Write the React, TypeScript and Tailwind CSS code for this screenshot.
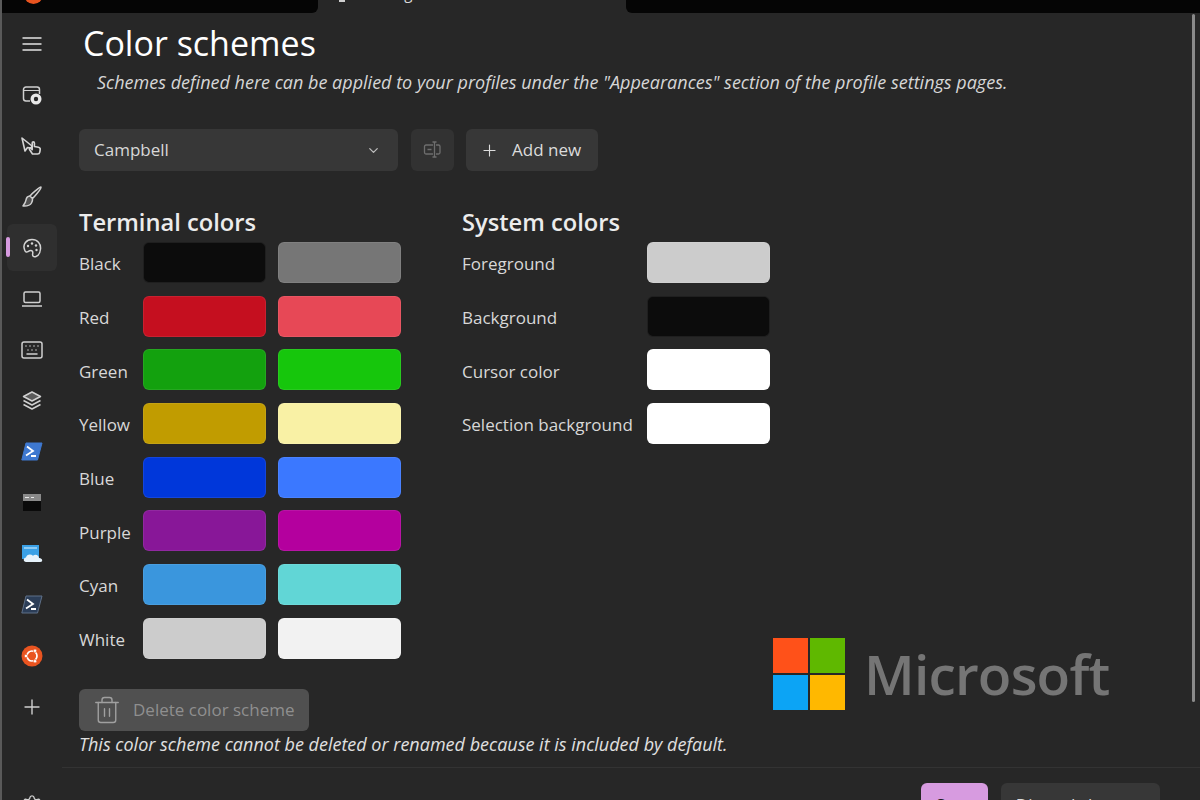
import { ChevronDown, Keyboard, Plus, Settings, Trash2 } from 'lucide-react'
import React from 'react'

const font = "font-['Open_Sans',sans-serif]"

const terminalColors = [
  { name: 'Black', dark: 'bg-[#0c0c0c]', light: 'bg-[#767676]' },
  { name: 'Red', dark: 'bg-[#c50f1f]', light: 'bg-[#e74856]' },
  { name: 'Green', dark: 'bg-[#13a10e]', light: 'bg-[#16c60c]' },
  { name: 'Yellow', dark: 'bg-[#c19c00]', light: 'bg-[#f9f1a5]' },
  { name: 'Blue', dark: 'bg-[#0037da]', light: 'bg-[#3b78ff]' },
  { name: 'Purple', dark: 'bg-[#881798]', light: 'bg-[#b4009e]' },
  { name: 'Cyan', dark: 'bg-[#3a96dd]', light: 'bg-[#61d6d6]' },
  { name: 'White', dark: 'bg-[#cccccc]', light: 'bg-[#f2f2f2]' },
]

const systemColors = [
  { name: 'Foreground', color: 'bg-[#cccccc]' },
  { name: 'Background', color: 'bg-[#0c0c0c]' },
  { name: 'Cursor color', color: 'bg-[#ffffff]' },
  { name: 'Selection background', color: 'bg-[#ffffff]' },
]

const MenuIcon = () => (
  <svg width="22" height="16" viewBox="0 0 22 16" stroke="#b4b4b4" strokeWidth="1.800">
    <path d="M1.500 2h19M1.500 8h19M1.500 14h19" />
  </svg>
)

const StartupIcon = () => (
  <svg width="22" height="22" viewBox="0 0 22 22" fill="none" stroke="#d0d0d0" strokeWidth="1.500">
    <path d="M9 17H5a2.500 2.500 0 0 1-2.500-2.500v-9A2.500 2.500 0 0 1 5 3h11a2.500 2.500 0 0 1 2.500 2.500V10" />
    <path d="M2.500 6.500h16" strokeWidth="1" />
    <circle cx="15" cy="15" r="5.500" fill="#e8e8e8" stroke="none" />
    <circle cx="15" cy="15" r="2.200" fill="#272727" stroke="none" />
  </svg>
)

const InteractionIcon = () => (
  <svg width="24" height="22" viewBox="0 0 24 22" fill="none" stroke="#d4d4d4" strokeWidth="1.600" strokeLinejoin="round">
    <path d="M2 3l3 13 2.500-3.500 3.500.5 1-2z" />
    <path d="M12.500 19l-3-4.500c-.6-1.100 1-2 1.800-1l.9 1.200V8c0-1.500 2.200-1.500 2.200 0v3.500l4 .8c1.400.3 2 1.200 1.800 2.400l-.4 2.400c-.2 1.200-1.100 1.900-2.300 1.900z" />
  </svg>
)

const BrushIcon = () => (
  <svg width="22" height="24" viewBox="0 0 22 24" fill="none" stroke="#d0d0d0" strokeWidth="1.500" strokeLinejoin="round">
    <path d="M20 2c.6.600-1.500 3.500-4 6.500-1.800 2.200-3.400 4-4.500 5l-2.500-2.500c1-1.200 2.800-3 5-4.800C17 3.700 19.400 1.400 20 2z" />
    <path d="M9 11c-2.500.2-3.700 1.800-4 4-.2 1.800-1.200 3.600-3 6 3.800.2 7.200-.6 8.500-3 .8-1.500 1.200-3 1-4.500" fill="#d0d0d0" fillOpacity=".25" />
  </svg>
)

const PaletteIcon = () => (
  <svg width="22" height="22" viewBox="0 0 22 22" fill="none" stroke="#d4d4d4" strokeWidth="1.500" strokeLinejoin="round">
    <path d="M3.500 12.500C1.500 7 5.500 2.500 11 2.500s9 4 8.500 9.500c-.3 3.500-1.800 6.500-4.500 7.500-2.500.9-3.800-.6-3.300-2.800.4-1.800-.3-3.200-2-3.200-1.200 0-2 .7-2.800 1.200-1.300.8-3 .2-3.400-2.200z" />
    <circle cx="7" cy="9" r="1.200" fill="#d4d4d4" stroke="none" />
    <circle cx="11" cy="6.500" r="1.200" fill="#d4d4d4" stroke="none" />
    <circle cx="15" cy="8.500" r="1.200" fill="#d4d4d4" stroke="none" />
    <circle cx="15.500" cy="13" r="1.200" fill="#d4d4d4" stroke="none" />
  </svg>
)

const LaptopIcon = () => (
  <svg width="22" height="20" viewBox="0 0 22 20" fill="none" stroke="#d0d0d0" strokeWidth="1.500">
    <rect x="3" y="3" width="16" height="10.500" rx="1.500" />
    <path d="M1 17h20" />
  </svg>
)

const LayersIcon = () => (
  <svg width="22" height="22" viewBox="0 0 22 22" fill="none" stroke="#d0d0d0" strokeWidth="1.500" strokeLinejoin="round">
    <path d="M11 2l8.500 4.500L11 11 2.500 6.500z" fill="#d0d0d0" fillOpacity=".3" />
    <path d="M2.500 10.500L11 15l8.500-4.500M2.500 14.500L11 19l8.500-4.500" />
  </svg>
)

const RenameIcon = () => (
  <svg width="22" height="22" viewBox="0 0 22 22" fill="none" stroke="#6e6e6e" strokeWidth="1.300">
    <path d="M11 6H4a1.500 1.500 0 0 0-1.500 1.500v6A1.500 1.500 0 0 0 4 15h7" />
    <path d="M14 6h2.500A1.500 1.500 0 0 1 18 7.500v6a1.500 1.500 0 0 1-1.500 1.500H14" />
    <path d="M12.500 3v15M10.500 3h4M10.500 18h4M5.500 10.500h4" />
  </svg>
)

const PowerShellIcon = ({ bg, edge }: { bg: string; edge: string }) => (
  <svg width="22" height="19" viewBox="0 0 22 19">
    <path d="M5 1h16l-4.500 17H0.800z" fill={bg} stroke={edge} strokeWidth="1" />
    <path d="M6 4.500l6 4.500-7 4.500M10 14h5" fill="none" stroke="#fff" strokeWidth="1.800" />
  </svg>
)

const CmdIcon = () => (
  <svg width="20" height="19" viewBox="0 0 20 19">
    <rect x="1" y="1" width="18" height="17" fill="#0a0a0a" />
    <rect x="1" y="1" width="18" height="7" fill="#8a8a8a" />
    <path d="M3 4.500h4M9 4.500h3" stroke="#e8e8e8" strokeWidth="1.200" />
  </svg>
)

const AzureIcon = () => (
  <svg width="23" height="19" viewBox="0 0 23 19">
    <rect x="1" y="1" width="17" height="14" fill="#3aa0e6" />
    <path d="M3 4h13" stroke="#a8d8f8" strokeWidth="1.500" />
    <path d="M5 18c-3 0-3-4.200 0-4.500.5-3 4.500-4.200 7-1.800 2.300-2 6-.6 6 2.300 3.500-.2 4.500 4 1.200 4z" fill="#e6f2fb" />
  </svg>
)

const UbuntuIcon = () => (
  <svg width="22" height="22" viewBox="0 0 22 22">
    <circle cx="11" cy="11" r="10.500" fill="#e95420" />
    <circle cx="11" cy="11" r="5" fill="none" stroke="#fff" strokeWidth="1.700" />
    <circle cx="5" cy="11" r="1.700" fill="#fff" stroke="#e95420" strokeWidth=".6" />
    <circle cx="14" cy="5.800" r="1.700" fill="#fff" stroke="#e95420" strokeWidth=".6" />
    <circle cx="14" cy="16.200" r="1.700" fill="#fff" stroke="#e95420" strokeWidth=".6" />
  </svg>
)

const navItems: React.ReactNode[] = [
  <MenuIcon key="menu" />,
  <StartupIcon key="startup" />,
  <InteractionIcon key="interaction" />,
  <BrushIcon key="brush" />,
  <PaletteIcon key="palette" />,
  <LaptopIcon key="laptop" />,
  <Keyboard key="keyboard" size={24} color="#d0d0d0" strokeWidth={1.5} />,
  <LayersIcon key="layers" />,
  <PowerShellIcon key="ps" bg="#3e78d0" edge="#3e78d0" />,
  <CmdIcon key="cmd" />,
  <AzureIcon key="azure" />,
  <PowerShellIcon key="ps2" bg="#2c3e58" edge="#5f7088" />,
  <UbuntuIcon key="ubuntu" />,
  <Plus key="plus" size={24} color="#d0d0d0" strokeWidth={1.4} />,
]

const App = () => {
  return (
    <div className={`${font} relative w-[1200px] h-[800px] overflow-hidden bg-[#272727] flex flex-col border-l-2 border-[#5a5a5a]`}>
      {/* tab strip */}
      <div className="flex h-[13px] shrink-0">
        <div className="w-[316px] bg-[#050505] rounded-br-md relative overflow-hidden">
          <div className="absolute left-[22px] top-[-15px] w-[19px] h-[19px] rounded-full bg-[#e95420]" />
        </div>
        <div className="w-[308px] bg-[#272727] relative overflow-hidden">
          <div className="absolute left-[21px] top-0 w-[6px] h-[2px] bg-[#cfcfcf]" />
          <span className="absolute left-[46px] top-[-17px] text-[15px] leading-[20px] text-[#d8d8d8]">Settings</span>
        </div>
        <div className="flex-1 bg-[#050505] rounded-bl-md" />
      </div>

      <div className="flex flex-1 min-h-0">
        {/* nav */}
        <div className="w-[60px] shrink-0 flex flex-col items-center pt-[5px]">
          {navItems.map((icon, i) => (
            <div key={i} className="relative w-[50px] h-[51px] shrink-0 flex items-center justify-center">
              {i === 4 && (
                <>
                  <div className="absolute inset-x-0 top-[2px] h-[47px] rounded-md bg-[#2f2f2f]" />
                  <div className="absolute left-[-1px] top-[15px] w-[4px] h-[20px] rounded-full bg-[#d79be0]" />
                </>
              )}
              <span className="relative flex">{icon}</span>
            </div>
          ))}
          <div className="mt-[62px] shrink-0">
            <Settings size={22} color="#d0d0d0" strokeWidth={1.5} />
          </div>
        </div>

        {/* content */}
        <div className="flex-1 min-w-0 flex flex-col">
          <div className="flex-1 min-h-0 pl-[17px] flex">
            <div className="flex-1 min-w-0">
              <h1 className="ml-[4px] mt-[6px] text-[34px] leading-[48px] font-medium text-white">Color schemes</h1>
              <p className="ml-[18px] mt-[4px] text-[18px] leading-[22px] italic text-[#d6d6d6] whitespace-nowrap">
                Schemes defined here can be applied to your profiles under the "Appearances" section of the profile settings pages.
              </p>

              <div className="mt-[36px] flex items-stretch h-[42px]">
                <div className="w-[319px] rounded-md bg-[#373737] flex items-center justify-between pl-[15px] pr-[17px] text-[17px] text-[#d8d8d8]">
                  <span>Campbell</span>
                  <ChevronDown size={15} color="#bdbdbd" />
                </div>
                <div className="ml-[13px] w-[43px] rounded-md bg-[#323232] flex items-center justify-center">
                  <RenameIcon />
                </div>
                <div className="ml-[12px] w-[132px] rounded-md bg-[#373737] flex items-center pl-[14px] gap-[13px] text-[17px] text-[#dcdcdc]">
                  <Plus size={19} color="#dcdcdc" strokeWidth={1.4} />
                  <span>Add new</span>
                </div>
              </div>

              <div className="mt-[35px] flex">
                <div className="w-[383px] shrink-0">
                  <h2 className="text-[23.7px] leading-[32px] font-semibold text-[#ececec]">Terminal colors</h2>
                  <div className="mt-[4px] flex flex-col gap-[12.7px]">
                    {terminalColors.map((c) => (
                      <div key={c.name} className="flex items-center h-[41px]">
                        <span className="w-[64px] pt-[3px] text-[17px] text-[#d8d8d8]">{c.name}</span>
                        <div className={`w-[123px] h-[41px] rounded-md ${c.dark} border border-[#ffffff14]`} />
                        <div className={`ml-[12px] w-[123px] h-[41px] rounded-md ${c.light} border border-[#ffffff14]`} />
                      </div>
                    ))}
                  </div>
                </div>
                <div>
                  <h2 className="text-[23.7px] leading-[32px] font-semibold text-[#ececec]">System colors</h2>
                  <div className="mt-[4px] flex flex-col gap-[12.7px]">
                    {systemColors.map((c) => (
                      <div key={c.name} className="flex items-center h-[41px]">
                        <span className="w-[185px] pt-[3px] text-[17px] text-[#d8d8d8] whitespace-nowrap">{c.name}</span>
                        <div className={`w-[123px] h-[41px] rounded-md ${c.color} border border-[#ffffff14]`} />
                      </div>
                    ))}
                  </div>
                </div>
              </div>

              <div className="mt-[30px] w-[230px] h-[42px] rounded-md bg-[#505050] flex items-center pl-[13px] gap-[11px] text-[17px] text-[#8f8f8f]">
                <Trash2 size={30} color="#a0a0a0" strokeWidth={1.1} />
                <span>Delete color scheme</span>
              </div>
              <p className="mt-[2px] text-[18px] leading-[22px] italic text-[#e0e0e0] whitespace-nowrap">
                This color scheme cannot be deleted or renamed because it is included by default.
              </p>
            </div>
            {/* scrollbar */}
            <div className="w-[8px] shrink-0 pt-[1px]">
              <div className="w-[3px] h-[688px] rounded-full bg-[#8a8a8a]" />
            </div>
          </div>

          {/* footer */}
          <div className="h-[33px] shrink-0 border-t border-[#333333] flex justify-end pr-[40px] pt-[15px] gap-[13px]">
            <div className="w-[67px] h-[42px] rounded-md bg-[#d79be0] flex justify-center pt-[9px] text-[17px] text-[#1c1c1c]">Save</div>
            <div className="w-[159px] h-[42px] rounded-md bg-[#373737] flex justify-center pt-[9px] text-[17px] text-[#dcdcdc]">Discard changes</div>
          </div>
        </div>
      </div>

      {/* watermark */}
      <div className="absolute left-[771px] top-[638px] flex items-center">
        <div className="grid grid-cols-[35px_35px] grid-rows-[35px_35px] gap-[2px]">
          <div className="bg-[#ff5119]" />
          <div className="bg-[#5fb800]" />
          <div className="bg-[#0ca4f5]" />
          <div className="bg-[#ffb800]" />
        </div>
        <span className="ml-[19px] text-[55px] leading-[72px] font-semibold text-[#757575] tracking-[-0.8px]">Microsoft</span>
      </div>
    </div>
  )
}

export default App
